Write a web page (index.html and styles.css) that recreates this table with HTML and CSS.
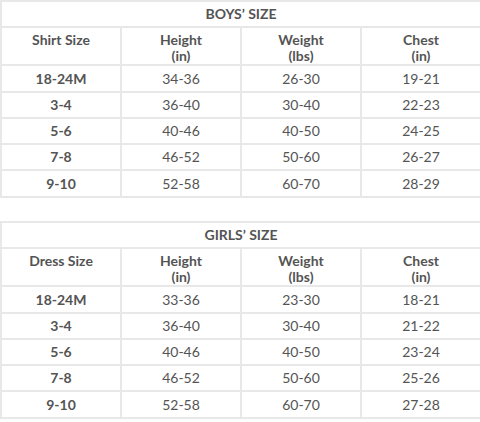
FILE: index.html
```html
<!DOCTYPE html>
<html>
<head>
<meta charset="utf-8">
<link rel="stylesheet" href="styles.css">
</head>
<body>
<table class="size-table boys">
  <colgroup><col><col><col><col></colgroup>
  <tr class="title-row"><th colspan="4">BOYS’ SIZE</th></tr>
  <tr class="head-row">
    <th>Shirt Size</th>
    <th>Height<br>(in)</th>
    <th>Weight<br>(lbs)</th>
    <th>Chest<br>(in)</th>
  </tr>
  <tr class="row-a"><th>18-24M</th><td>34-36</td><td>26-30</td><td>19-21</td></tr>
  <tr><th>3-4</th><td>36-40</td><td>30-40</td><td>22-23</td></tr>
  <tr><th>5-6</th><td>40-46</td><td>40-50</td><td>24-25</td></tr>
  <tr><th>7-8</th><td>46-52</td><td>50-60</td><td>26-27</td></tr>
  <tr class="row-a"><th>9-10</th><td>52-58</td><td>60-70</td><td>28-29</td></tr>
</table>
<table class="size-table girls">
  <colgroup><col><col><col><col></colgroup>
  <tr class="title-row"><th colspan="4">GIRLS’ SIZE</th></tr>
  <tr class="head-row">
    <th>Dress Size</th>
    <th>Height<br>(in)</th>
    <th>Weight<br>(lbs)</th>
    <th>Chest<br>(in)</th>
  </tr>
  <tr class="row-a"><th>18-24M</th><td>33-36</td><td>23-30</td><td>18-21</td></tr>
  <tr><th>3-4</th><td>36-40</td><td>30-40</td><td>21-22</td></tr>
  <tr><th>5-6</th><td>40-46</td><td>40-50</td><td>23-24</td></tr>
  <tr><th>7-8</th><td>46-52</td><td>50-60</td><td>25-26</td></tr>
  <tr class="row-a"><th>9-10</th><td>52-58</td><td>60-70</td><td>27-28</td></tr>
</table>
</body>
</html>
```
FILE: styles.css
```css
html, body {
  margin: 0;
  padding: 0;
  background: #ffffff;
}
body {
  font-family: Lato, "Liberation Sans", sans-serif;
  font-size: 14px;
  color: #545454;
}
.size-table {
  width: 480px;
  table-layout: fixed;
  border-collapse: collapse;
  border: 2px solid #e8e8e8;
}
.size-table col {
  width: 120px;
}
.size-table.girls {
  margin-top: 23px;
}
.size-table th,
.size-table td {
  border: 2px solid #e8e8e8;
  padding: 0;
  text-align: center;
  vertical-align: middle;
  line-height: 16px;
  height: 24px;
}
.size-table th {
  font-weight: bold;
}
.size-table td {
  font-weight: normal;
}
.size-table .title-row th {
  height: 24px;
}
.size-table .head-row th {
  height: 32px;
  vertical-align: top;
  padding-top: 4px;
  line-height: 16px;
}
.size-table .row-a th,
.size-table .row-a td {
  height: 25px;
}
```
